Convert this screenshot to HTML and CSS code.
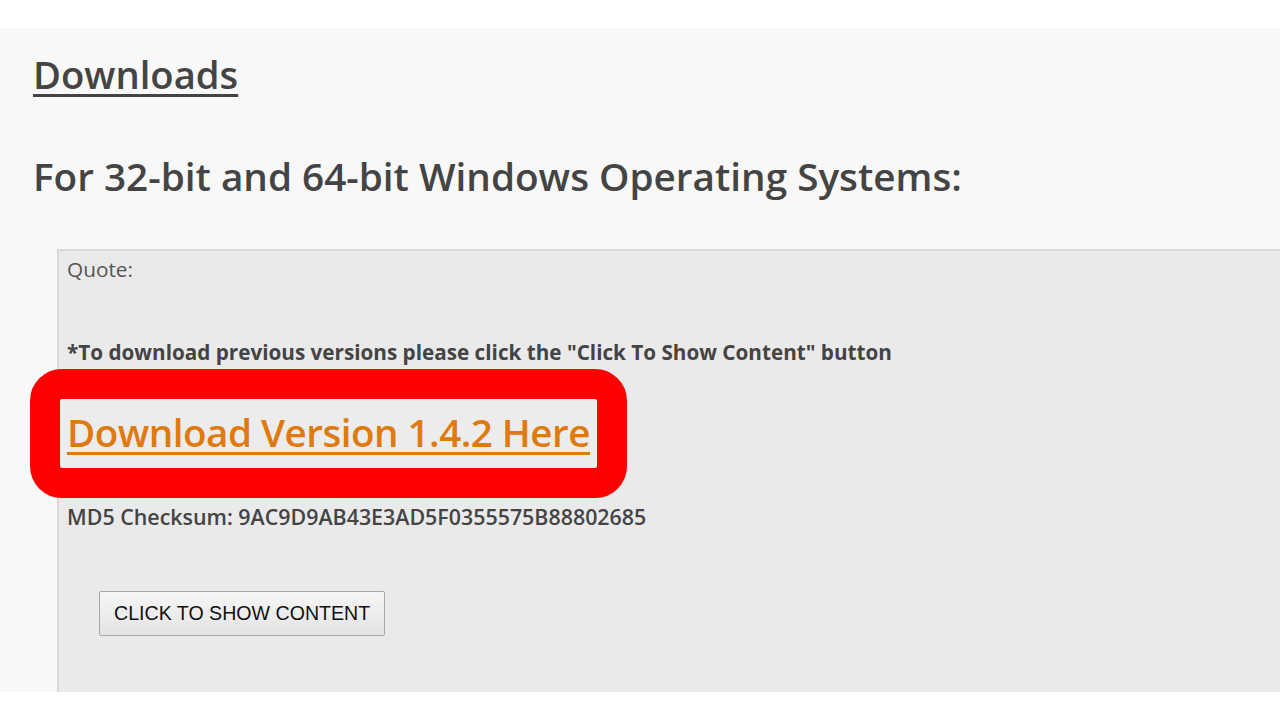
FILE: index.html
```html
<!DOCTYPE html>
<html>
<head>
<meta charset="utf-8">
<link rel="stylesheet" href="styles.css">
</head>
<body>
<div class="page">
  <h1 class="title"><a href="#">Downloads</a></h1>
  <h2 class="subtitle">For 32-bit and 64-bit Windows Operating Systems:</h2>
  <div class="quote">
    <div class="quote-label">Quote:</div>
    <p class="note">*To download previous versions please click the "Click To Show Content" button</p>
    <div class="link-row">
      <span class="highlight"></span>
      <a class="dl-link" href="#">Download Version 1.4.2 Here</a>
    </div>
    <p class="checksum">MD5 Checksum: 9AC9D9AB43E3AD5F0355575B88802685</p>
    <button class="show-btn" type="button">CLICK TO SHOW CONTENT</button>
  </div>
</div>
</body>
</html>
```
FILE: styles.css
```css
html, body {
  margin: 0;
  padding: 0;
  background: #ffffff;
}
.page {
  margin-top: 28px;
  height: 664px;
  background: #f8f8f8;
  padding-left: 33px;
  overflow: hidden;
  font-family: "Open Sans", "Noto Sans", sans-serif;
  color: #444444;
}
.title {
  margin: 0;
  padding-top: 22px;
  font-size: 38.2px;
  font-weight: 600;
  line-height: 48px;
}
.title a {
  color: #444444;
  text-decoration: underline;
  text-decoration-thickness: 3px;
  text-underline-offset: 5px;
}
.subtitle {
  margin: 54px 0 0 0;
  font-size: 38.7px;
  font-weight: 600;
  line-height: 48px;
}
.quote {
  margin: 49px 0 0 24px;
  border-top: 2px solid #d8d8d8;
  border-left: 2px solid #d8d8d8;
  background: #eaeaea;
  padding: 6px 0 0 8px;
  height: 600px;
}
.quote-label {
  font-size: 20.8px;
  font-weight: 400;
  line-height: 24px;
  color: #555555;
}
.note {
  margin: 59px 0 0 0;
  font-size: 20.7px;
  font-weight: 700;
  line-height: 24px;
}
.link-row {
  position: relative;
  margin-top: 35px;
  height: 66px;
  display: flex;
  align-items: center;
}
.highlight {
  position: absolute;
  left: -37px;
  top: -30px;
  width: 537px;
  height: 69px;
  border: 30px solid #ff0000;
  border-radius: 32px;
  background: #ececec;
}
.dl-link {
  position: relative;
  font-size: 38.6px;
  font-weight: 600;
  color: #df7a0e;
  text-decoration: underline;
  text-decoration-thickness: 3px;
  text-underline-offset: 5px;
  letter-spacing: -0.5px;
}
.checksum {
  margin: 39px 0 0 0;
  font-size: 21.4px;
  font-weight: 600;
  line-height: 26px;
}
.show-btn {
  margin: 61px 0 0 32px;
  height: 45px;
  padding: 0 14px;
  font-family: "Liberation Sans", Arial, sans-serif;
  font-size: 19.6px;
  color: #111111;
  background: linear-gradient(#f6f6f6, #e3e3e3);
  border: 1px solid #a8a8a8;
  border-radius: 2px;
}
```
